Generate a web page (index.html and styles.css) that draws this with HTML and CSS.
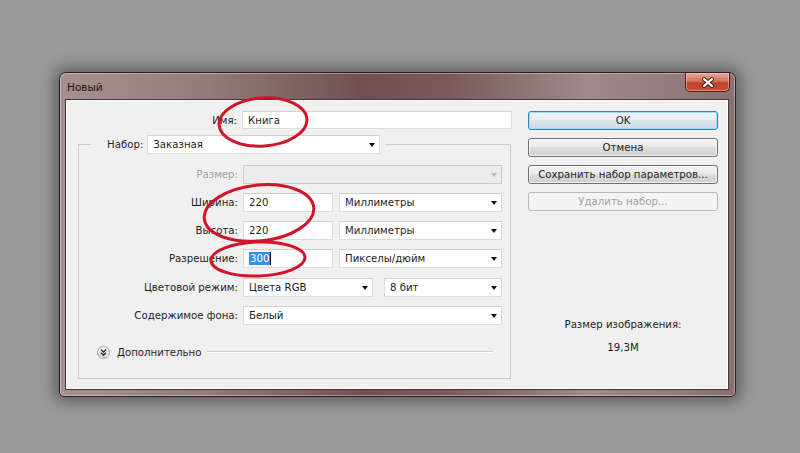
FILE: index.html
```html
<!DOCTYPE html>
<html lang="ru">
<head>
<meta charset="utf-8">
<title>Новый</title>
<link rel="stylesheet" href="styles.css">
</head>
<body>
<div class="window">
  <div class="titlebar">
    <span class="title">Новый</span>
    <div class="close">
      <svg width="14" height="11" viewBox="0 0 14 11">
        <path d="M3 2 L11 9 M11 2 L3 9" stroke="#3b1b18" stroke-width="4" stroke-linecap="round"/>
        <path d="M3 2 L11 9 M11 2 L3 9" stroke="#ffffff" stroke-width="2.2" stroke-linecap="round"/>
      </svg>
    </div>
  </div>
  <div class="client">
    <div class="left">
      <div class="name-row">
        <span class="lbl name-lbl">Имя:</span>
        <div class="field name-field">Книга</div>
      </div>
      <fieldset class="group">
        <legend class="preset">
          <span class="lbl preset-lbl">Набор:</span>
          <div class="select preset-select"><span class="val">Заказная</span><span class="caret"></span></div>
        </legend>
        <div class="row">
          <span class="lbl disabled-lbl">Размер:</span>
          <div class="select disabled w-full"><span class="val"></span><span class="caret"></span></div>
        </div>
        <div class="row">
          <span class="lbl">Ширина:</span>
          <div class="field w-num">220</div>
          <div class="select w-unit"><span class="val">Миллиметры</span><span class="caret"></span></div>
        </div>
        <div class="row">
          <span class="lbl">Высота:</span>
          <div class="field w-num">220</div>
          <div class="select w-unit"><span class="val">Миллиметры</span><span class="caret"></span></div>
        </div>
        <div class="row row-res">
          <span class="lbl">Разрешение:</span>
          <div class="field w-num"><span class="sel">300</span><span class="cursor"></span></div>
          <div class="select w-unit"><span class="val">Пикселы/дюйм</span><span class="caret"></span></div>
        </div>
        <div class="row">
          <span class="lbl">Цветовой режим:</span>
          <div class="select w-mode"><span class="val">Цвета RGB</span><span class="caret"></span></div>
          <div class="select w-bits"><span class="val">8 бит</span><span class="caret"></span></div>
        </div>
        <div class="row">
          <span class="lbl">Содержимое фона:</span>
          <div class="select w-full"><span class="val">Белый</span><span class="caret"></span></div>
        </div>
        <div class="advanced">
          <span class="adv-icon">
            <svg width="13" height="13" viewBox="0 0 13 13">
              <defs>
                <linearGradient id="ag" x1="0" y1="0" x2="0" y2="1">
                  <stop offset="0" stop-color="#ffffff"/>
                  <stop offset="1" stop-color="#d4d4d4"/>
                </linearGradient>
              </defs>
              <circle cx="6.5" cy="6.5" r="6" fill="url(#ag)" stroke="#a6a6a6"/>
              <path d="M4 3.6 L6.5 6 L9 3.6 M4 6.8 L6.5 9.2 L9 6.8" fill="none" stroke="#2a2a2a" stroke-width="1.4"/>
            </svg>
          </span>
          <span class="adv-text">Дополнительно</span>
          <span class="adv-line"></span>
        </div>
      </fieldset>
    </div>
    <div class="right">
      <button class="btn btn-ok">OK</button>
      <button class="btn">Отмена</button>
      <button class="btn">Сохранить набор параметров...</button>
      <button class="btn btn-disabled">Удалить набор...</button>
      <div class="info">Размер изображения:</div>
      <div class="info info-size">19,3M</div>
    </div>
  </div>
</div>
<svg class="marks" width="800" height="453" viewBox="0 0 800 453">
  <ellipse cx="263" cy="122" rx="44" ry="24" transform="rotate(-4 263 122)"/>
  <ellipse cx="259" cy="213" rx="55" ry="28" transform="rotate(-6 259 213)"/>
  <ellipse cx="258" cy="259" rx="47" ry="17" transform="rotate(-2 258 259)"/>
</svg>
</body>
</html>
```

FILE: styles.css
```css
* { box-sizing: border-box; }
html, body { margin: 0; }
body {
  width: 800px;
  height: 453px;
  overflow: hidden;
  position: relative;
  padding: 72px 0 0 59px;
  background: #9a9a9a;
  font-family: "DejaVu Sans", sans-serif;
  font-size: 10.2px;
  color: #1e1e1e;
}

.window {
  width: 677px;
  height: 325px;
  border: 1px solid #2a1f1f;
  border-radius: 7px 7px 5px 5px;
  background: linear-gradient(90deg, #a6918f 0%, #937b7a 22%, #6f5050 45%, #7a5b5b 58%, #9e8a89 78%, #8a7171 100%);
  box-shadow: 0 0 14px 5px rgba(50, 50, 50, 0.55), inset 0 0 0 1px rgba(255, 255, 255, 0.35);
  display: flex;
  flex-direction: column;
}

.titlebar {
  height: 27px;
  display: flex;
  align-items: center;
  padding-left: 7px;
  flex-shrink: 0;
}
.title {
  font-size: 10.5px;
  color: #1a1212;
  margin-top: 1px;
}
.close {
  margin-left: auto;
  margin-right: 5px;
  align-self: flex-start;
  width: 45px;
  height: 19px;
  border: 1px solid #4a2018;
  border-top: none;
  border-radius: 0 0 5px 5px;
  background: linear-gradient(#e9a797 0%, #d5735f 45%, #c2402a 55%, #c9502f 100%);
  box-shadow: inset 0 0 0 1px rgba(255, 220, 210, 0.45);
  display: flex;
  align-items: center;
  justify-content: center;
}

.client {
  margin: 0 7px 7px 6px;
  height: 289px;
  background: #f0f0f0;
  border: 1px solid #fbfbfb;
  box-shadow: 0 0 0 1px #4d3535;
  display: flex;
  gap: 16px;
  padding: 10px 9px 0 11px;
}

.left { width: 434px; }
.right {
  width: 190px;
  display: flex;
  flex-direction: column;
  gap: 8px;
}

.lbl { white-space: nowrap; }

.name-row {
  display: flex;
  align-items: center;
  height: 18px;
  gap: 5px;
}
.name-lbl { width: 159px; text-align: right; }
.name-field { width: 270px; height: 18px; }

.field, .select {
  background: #ffffff;
  border: 1px solid #dcdcdc;
  border-top-color: #d0d0d0;
  display: flex;
  align-items: center;
  padding-left: 5px;
  white-space: nowrap;
}
.select .val { flex: 1; }
.caret {
  width: 0;
  height: 0;
  border-left: 3.5px solid transparent;
  border-right: 3.5px solid transparent;
  border-top: 4px solid #111;
  margin-right: 4px;
}
.select.disabled {
  background: #ececec;
  border-color: #c9c9c9;
}
.select.disabled .caret { border-top-color: #b4b4b4; }

.group {
  margin: 6px 0 0 0;
  width: 433px;
  min-width: 0;
  border: 1px solid #cbcbcb;
  padding: 11px 7px 18px 0;
}
.preset {
  margin-left: 12px;
  padding: 0 5px 0 16px;
  display: flex;
  align-items: center;
  gap: 4px;
  height: 19px;
}
.preset-select { width: 233px; height: 19px; }

.row {
  display: flex;
  align-items: center;
  height: 19px;
  margin-bottom: 9px;
}
.row-res { margin-bottom: 10px; }
.row .lbl {
  width: 159px;
  text-align: right;
  margin-right: 5px;
}
.row .select, .row .field { height: 19px; }
.disabled-lbl { color: #a2a2a2; }

.w-full { width: 259px; }
.w-num { width: 90px; margin-right: 6px; }
.w-unit { width: 163px; }
.w-mode { width: 130px; margin-right: 11px; }
.w-bits { width: 118px; }

.sel {
  background: #3390f0;
  color: #ffffff;
  padding: 0 1px;
  line-height: 13px;
}
.cursor {
  width: 1px;
  height: 13px;
  background: #000;
}

.advanced {
  display: flex;
  align-items: center;
  height: 16px;
  margin-top: 19px;
  padding-left: 18px;
}
.adv-icon { display: flex; margin-right: 7px; }
.adv-text { margin-right: 5px; }
.adv-line {
  flex: 1;
  height: 2px;
  border-top: 1px solid #cfcfcf;
  border-bottom: 1px solid #ffffff;
  margin-right: 10px;
}

.btn {
  height: 19px;
  width: 190px;
  border: 1px solid #707070;
  border-radius: 3px;
  background: linear-gradient(#f3f3f3 0%, #ebebeb 45%, #dddddd 50%, #cfcfcf 100%);
  box-shadow: inset 0 0 0 1px rgba(255, 255, 255, 0.7);
  font: inherit;
  color: #1e1e1e;
  padding: 0;
  line-height: 17px;
  text-align: center;
}
.btn-ok {
  border-color: #3c7fb1;
  box-shadow: inset 0 0 0 1px #9fdcf7;
  background: linear-gradient(#f2f5f7 0%, #e9eef2 45%, #dde4ea 50%, #d2dbe2 100%);
}
.btn-disabled {
  border-color: #b8b8b8;
  background: #f4f4f4;
  color: #a0a0a0;
  box-shadow: none;
}

.info {
  text-align: center;
  line-height: 14px;
  margin-top: 99px;
}
.info-size { margin-top: 1px; }

.marks {
  position: absolute;
  left: 0;
  top: 0;
  pointer-events: none;
}
.marks ellipse {
  fill: none;
  stroke: #d2142b;
  stroke-width: 3;
}
```
